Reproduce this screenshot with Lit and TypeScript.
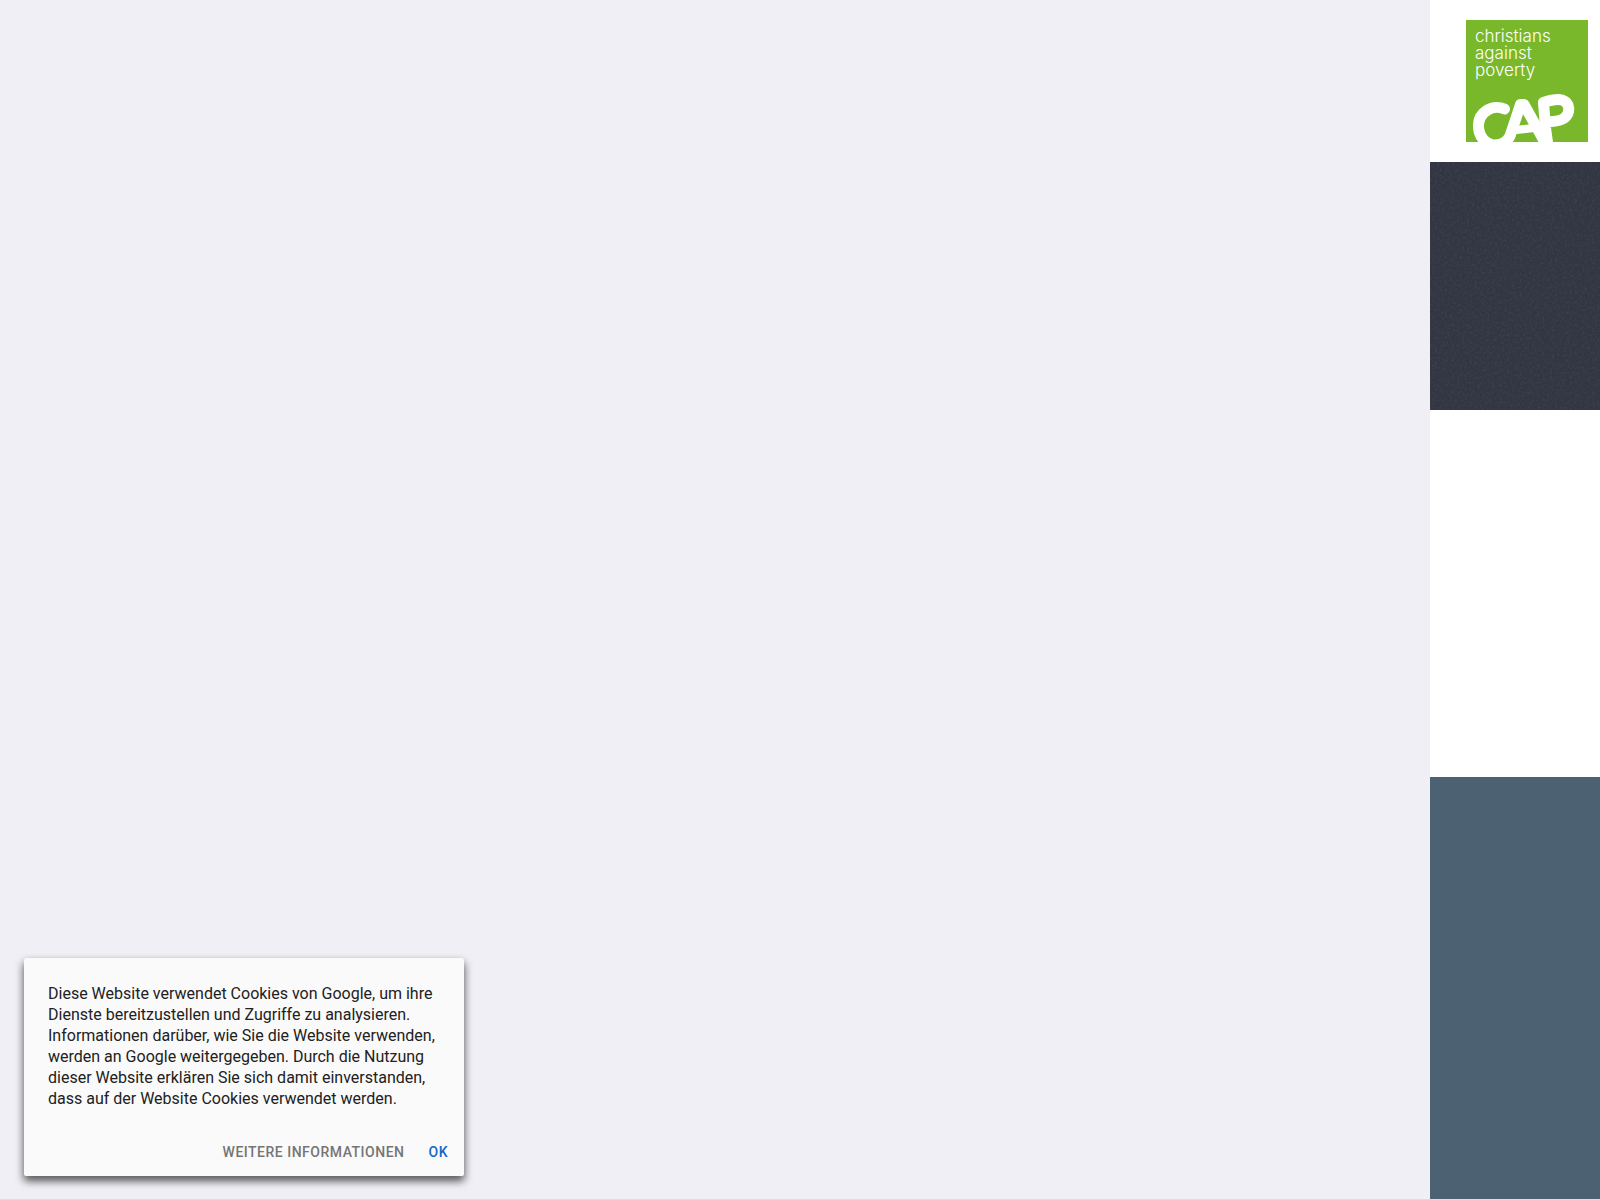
import { LitElement, html, css } from "lit";
import { customElement, state } from "lit/decorators.js";

@customElement("cap-logo")
export class CapLogo extends LitElement {
  static styles = css`
    :host {
      display: block;
    }
    .logo {
      box-sizing: border-box;
      display: flex;
      flex-direction: column;
      justify-content: space-between;
      width: 122px;
      height: 122px;
      padding-top: 8px;
      background: #78b82a;
    }
    .words {
      padding-left: 9px;
      font-family: Inter, "Open Sans", sans-serif;
      font-size: 17px;
      font-weight: 300;
      line-height: 17px;
      color: #fff;
    }
    .word {
      display: block;
    }
    .mark {
      display: block;
      width: 122px;
      height: 52px;
    }
  `;

  render() {
    return html`
      <div class="logo">
        <div class="words">
          <span class="word">christians</span>
          <span class="word">against</span>
          <span class="word">poverty</span>
        </div>
        <svg class="mark" viewBox="0 70 122 52" role="img" aria-label="CAP">
          <g fill="none" stroke="#fff" stroke-width="11" stroke-linecap="round" stroke-linejoin="round">
            <path d="M38.500 89C34 87 27 86.500 21.500 90C15 94 12 100 12.500 107C13 117 20 125 29 125C36 125 41 122 44 116L54.500 84.500L58 84.500L81 126" />
            <path d="M46 110.500L72 107.500" stroke-width="8" />
            <path d="M82 126L79.500 108L77.500 82.500C85 80 92 79 96 80C104.500 82.500 104.500 93 98.500 98C94 101.500 87 101.500 81 102" />
          </g>
        </svg>
      </div>
    `;
  }
}

@customElement("cookie-notice")
export class CookieNotice extends LitElement {
  static styles = css`
    :host {
      display: block;
      font-family: Roboto, "Liberation Sans", sans-serif;
    }
    .card {
      box-sizing: border-box;
      display: flex;
      flex-direction: column;
      gap: 27px;
      max-width: 440px;
      padding: 25px 8px 8px 24px;
      border-radius: 2px;
      background: #fafafa;
      box-shadow: 0 4px 8px rgba(0, 0, 0, 0.2), 0 5px 8px rgba(0, 0, 0, 0.55);
    }
    .message {
      margin: 0;
      padding-right: 16px;
      font-size: 16px;
      line-height: 21px;
      color: #212121;
    }
    .actions {
      display: flex;
      justify-content: flex-end;
      gap: 8px;
    }
    .action {
      padding: 8px;
      border: 0;
      background: none;
      font-family: inherit;
      font-size: 14px;
      font-weight: 500;
      line-height: 16px;
      letter-spacing: 0.5px;
      text-transform: uppercase;
      text-decoration: none;
      color: #757575;
      cursor: pointer;
    }
    .confirm {
      color: #1565c8;
    }
  `;

  private accept() {
    this.dispatchEvent(new CustomEvent("accept"));
  }

  render() {
    return html`
      <section class="card" aria-label="Cookies">
        <p class="message">
          Diese Website verwendet Cookies von Google, um ihre Dienste bereitzustellen und Zugriffe zu
          analysieren. Informationen darüber, wie Sie die Website verwenden, werden an Google
          weitergegeben. Durch die Nutzung dieser Website erklären Sie sich damit einverstanden, dass
          auf der Website Cookies verwendet werden.
        </p>
        <div class="actions">
          <a class="action" href="#cookies">Weitere Informationen</a>
          <button class="action confirm" @click=${this.accept}>OK</button>
        </div>
      </section>
    `;
  }
}

@customElement("app-root")
export class AppRoot extends LitElement {
  static styles = css`
    :host {
      display: block;
    }
    .page {
      box-sizing: border-box;
      display: grid;
      grid-template-columns: 1fr 170px;
      min-height: 100vh;
      border-bottom: 1px solid #dddddf;
      background: #f0eff5;
    }
    .content {
      display: flex;
      flex-direction: column;
      justify-content: flex-end;
      padding: 24px;
      padding-bottom: 23px;
    }
    .side {
      display: grid;
      grid-template-rows: auto 248px 367px 1fr;
      background: #fff;
    }
    .brand {
      display: flex;
      justify-content: flex-end;
      padding: 20px 12px;
    }
    .texture {
      display: block;
      width: 100%;
      height: 100%;
      background: #323542;
    }
    .slate {
      grid-row: 4;
      background: #4c6172;
    }
  `;

  @state() private noticeOpen = true;

  render() {
    return html`
      <div class="page">
        <main class="content">
          ${this.noticeOpen
            ? html`<cookie-notice @accept=${() => (this.noticeOpen = false)}></cookie-notice>`
            : null}
        </main>
        <aside class="side">
          <div class="brand"><cap-logo></cap-logo></div>
          <svg class="texture" aria-hidden="true">
            <filter id="grain" x="0" y="0" width="100%" height="100%">
              <feTurbulence type="fractalNoise" baseFrequency="0.4" numOctaves="3" seed="4" />
              <feColorMatrix values="0 0 0 0 0.4  0 0 0 0 0.44  0 0 0 0 0.5  1.2 0 0 0 -0.5" />
            </filter>
            <rect width="100%" height="100%" filter="url(#grain)" opacity="0.16" />
          </svg>
          <div class="slate"></div>
        </aside>
      </div>
    `;
  }
}
